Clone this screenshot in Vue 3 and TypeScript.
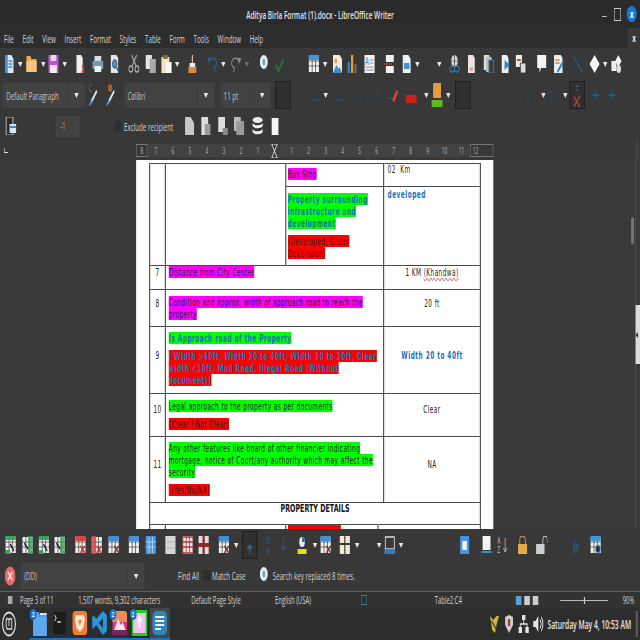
<script setup lang="ts">
// the reference is a 1920x1080 desktop squeezed into a square, so the whole
// page is laid out at 1138x640 and narrowed once at the root
const K = 1138 / 640

type Item = [string, number]

const sizes: Record<string, [number, number]> = {
  a: [8, 18],
  slot: [28, 28],
  slotx: [28, 28],
  slotup: [28, 28],
}

function place(items: Item[], start = 0) {
  let end = start
  return items.map(([name, x]) => {
    const [w, h] = sizes[name] ?? [20, 18]
    const ml = x * K - end
    end = x * K + w
    return { name, ml, w, h }
  })
}

const bar1 = place([
  ['doc', 4], ['a', 18], ['folder', 26], ['a', 41], ['save', 48], ['a', 62.5], ['pdf', 75], ['print', 92],
  ['prev', 109], ['cut', 128], ['copy', 145], ['paste', 161], ['a', 175], ['clone', 187], ['undo', 207],
  ['a', 221], ['redo', 230], ['adim', 243], ['nav', 258], ['check', 274], ['tbl', 308], ['a', 323],
  ['image', 332], ['chart', 347], ['textbox', 364], ['pbreak', 384], ['field', 401], ['a', 415], ['a', 437],
  ['link', 449], ['foot', 466], ['end', 483], ['mark', 500], ['xref', 515], ['comment', 536], ['track', 553],
  ['line', 572], ['diamond', 589], ['a', 603], ['shapes', 611],
])
const brushes = place([['brush1', 88], ['brush2', 105]], 85 * K)
const bar2a = place([['slot', 275]], 270 * K)
const bar2b = place([
  ['dash', 311], ['a', 323], ['dash', 333], ['two', 355], ['two', 372], ['pen', 388], ['redbar', 405], ['a', 424],
  ['hl', 431], ['a', 446], ['slot', 455], ['dots', 522], ['a', 541], ['dots', 545], ['a', 563], ['slotx', 569],
  ['fade', 590], ['fade', 606],
], (275 * K) + 28)
const bar3a = place([['merge', 5]])
const bar3b = place([
  ['p1', 184], ['p2', 200], ['p3', 217], ['p4', 233], ['db', 252], ['pwhite', 269],
], 175 * K)
const bar4 = place([
  ['tg', 5], ['tg2', 22], ['tg', 38], ['tg2', 54], ['tr', 75], ['tr2', 91], ['tb', 108], ['tbl', 128], ['tfill', 145],
  ['tgray', 165], ['tred', 182], ['tdark', 198], ['tb', 218], ['a', 234], ['slotup', 242], ['updown', 262],
  ['down', 278], ['fill', 296], ['a', 313], ['tb', 320], ['win', 339], ['a', 355], ['a', 377], ['border', 384],
  ['a', 399], ['tfill2', 459], ['pg', 481], ['sort', 497], ['lock', 517], ['unlock', 536], ['fx', 572], ['tcalc', 590],
])

const menus = ['File', 'Edit', 'View', 'Insert', 'Format', 'Styles', 'Table', 'Form', 'Tools', 'Window', 'Help']
const ticks = ['7', '6', '5', '4', '3', '2', '1', '', '1', '2', '3', '4', '5', '6', '7', '8', '9', '10', '11']

interface Block {
  tone: 'pink' | 'green' | 'red'
  bold?: boolean
  lines: string[]
}
interface Row {
  no: number
  cls: string
  blocks: Block[]
  value: string
  blue?: boolean
}

const rows: Row[] = [
  {
    no: 7, cls: 'r7', value: '1 KM (Khandwa)',
    blocks: [{ tone: 'pink', lines: ['Distance from City Center'] }],
  },
  {
    no: 8, cls: 'r8', value: '20 ft',
    blocks: [{ tone: 'pink', lines: ['Condition and approx. width of approach road to reach the', 'property'] }],
  },
  {
    no: 9, cls: 'r9', value: 'Width 20 to 40ft', blue: true,
    blocks: [
      { tone: 'green', bold: true, lines: ['Is Approach road of the Property'] },
      { tone: 'red', bold: true, lines: ['( Width >40ft, Width 20 to 40ft, Width 10 to 20ft, Clear', 'width <10ft, Mud Road, Illegal Road (Without', 'document))'] },
    ],
  },
  {
    no: 10, cls: 'r10', value: 'Clear',
    blocks: [
      { tone: 'green', lines: ['Legal approach to the property as per documents'] },
      { tone: 'red', lines: ['(Clear / Not Clear)'] },
    ],
  },
  {
    no: 11, cls: 'r11', value: 'NA',
    blocks: [
      { tone: 'green', lines: ['Any other features like board of other financier indicating', 'mortgage, notice of Court/any authority which may affect the', 'security'] },
      { tone: 'red', lines: [' (Yes/No/NA)'] },
    ],
  },
]

const dock = [
  { icon: 'd-files', badge: true },
  { icon: 'd-term', badge: false },
  { icon: 'd-brave', badge: false },
  { icon: 'd-code', badge: false },
  { icon: 'd-photo', badge: true },
  { icon: 'd-pink', badge: true },
  { icon: 'd-writer', badge: false, on: true },
]
</script>

<template>
  <div class="app">
    <svg class="defs" aria-hidden="true">
      <defs>
        <symbol id="a" viewBox="0 0 8 18"><path d="M0 7h8l-4 5z" fill="#e8e8e8" /></symbol>
        <symbol id="adim" viewBox="0 0 20 18"><path d="M3 7h8l-4 5z" fill="#6a6a6a" /></symbol>
        <symbol id="doc" viewBox="0 0 20 18"><path d="M3 0h10l4 4v14H3z" fill="#dce8f3" /><path d="M3 0h4v18H3z" fill="#4a98d8" /><path d="M8 6h7M8 9h7M8 12h7" stroke="#3b86c6" stroke-width="1.5" /></symbol>
        <symbol id="folder" viewBox="0 0 20 18"><path d="M1 1h7l2 3h9v13H1z" fill="#e2a94f" /><path d="M1 6h18v11H1z" fill="#f4c679" /></symbol>
        <symbol id="save" viewBox="0 0 20 18"><path d="M1 0h18v18H1z" fill="#b653c8" /><path d="M5 0h10v6H5z" fill="#eed6f2" /><path d="M4 10h12v8H4z" fill="#f5e9f7" /></symbol>
        <symbol id="pdf" viewBox="0 0 20 18"><path d="M3 0h8l3 3v15H3z" fill="#f0f0f0" /><path d="M13 10l4 8M17 11l-5 7" stroke="#d04040" stroke-width="1.6" /></symbol>
        <symbol id="print" viewBox="0 0 20 18"><path d="M4 1h12v5H4z" fill="#d7dde2" /><path d="M0 6h20v8H0z" fill="#7e97aa" /><path d="M4 11h12v6H4z" fill="#f4f4f4" /></symbol>
        <symbol id="prev" viewBox="0 0 20 18"><path d="M3 0h10l3 3v15H3z" fill="#e6e6e6" /><circle cx="10" cy="9" r="4" fill="#5c8fb4" stroke="#27618f" stroke-width="1.5" /><path d="M13 12l4 5" stroke="#27618f" stroke-width="2" /></symbol>
        <symbol id="cut" viewBox="0 0 20 18"><g fill="none" stroke="#b4b4b4" stroke-width="1.6"><path d="M6 0l8 11M15 0l-8 11" /><ellipse cx="4.5" cy="14" rx="3.5" ry="3" /><ellipse cx="15.5" cy="14" rx="3.5" ry="3" /></g></symbol>
        <symbol id="copy" viewBox="0 0 20 18"><path d="M1 0h11v14H1z" fill="#e6e6e6" /><path d="M8 4h11v14H8z" fill="#a9a9a9" /></symbol>
        <symbol id="paste" viewBox="0 0 20 18"><path d="M1 2h14v16H1z" fill="#f3e5c2" /><path d="M4 0h8v4H4z" fill="#8a6a3c" /><path d="M9 7h10v11H9z" fill="#f8f8f8" /></symbol>
        <symbol id="clone" viewBox="0 0 20 18"><path d="M9 0h2v8H9z" fill="#d8c9a8" /><path d="M5 8h10v4H5z" fill="#eee" /><path d="M3 12h14v6H3z" fill="#e08a34" /></symbol>
        <symbol id="undo" viewBox="0 0 20 18"><path d="M4 6a7 5 0 1 1 8 7l2 4" fill="none" stroke="#24608f" stroke-width="1.8" /><path d="M0 3h7l-3 6z" fill="#24608f" /></symbol>
        <symbol id="redo" viewBox="0 0 20 18"><path d="M16 6a7 5 0 1 0-8 7l-2 4" fill="none" stroke="#8e8e8e" stroke-width="1.4" /><path d="M20 3h-7l3 6z" fill="#8e8e8e" /></symbol>
        <symbol id="nav" viewBox="0 0 20 18"><circle cx="10" cy="7" r="7" fill="#e8f0f6" /><ellipse cx="10" cy="7" rx="2.5" ry="3.5" fill="#6aa6d6" /></symbol>
        <symbol id="check" viewBox="0 0 20 18"><path d="M3 10l5 6 9-11" fill="none" stroke="#24703a" stroke-width="3" /></symbol>
        <symbol id="grid" viewBox="0 0 20 18"><path d="M1 1h18v16H1z" fill="#f2f2f2" /><path d="M7 1v16M13 1v16M1 6h18M1 11h18" stroke="#4a4a4a" stroke-width="1" /></symbol>
        <symbol id="tbl" viewBox="0 0 20 18"><use href="#grid" /><path d="M1 0h18v5H1z" fill="#4394dc" /></symbol>
        <symbol id="tfill" viewBox="0 0 20 18"><path d="M1 0h18v18H1z" fill="#4596de" /><path d="M7 1v16M13 1v16M1 6h18M1 11h18" stroke="#c9e0f4" stroke-width="1" /></symbol>
        <symbol id="tfill2" viewBox="0 0 20 18"><path d="M2 0h16v18H2z" fill="#4596de" /><path d="M6 5h8v9H6z" fill="#f2f2f2" /></symbol>
        <symbol id="tg" viewBox="0 0 20 18"><use href="#grid" /><path d="M1 0h18v4H1zM1 14h8v4H1z" fill="#3aa25a" /><path d="M9 8l7 7" stroke="#222" stroke-width="2" /></symbol>
        <symbol id="tg2" viewBox="0 0 20 18"><use href="#grid" /><path d="M11 0h8v18h-8z" fill="#3aa25a" opacity=".8" /><path d="M4 7l7 6" stroke="#222" stroke-width="2" /></symbol>
        <symbol id="tr" viewBox="0 0 20 18"><use href="#grid" /><path d="M1 0h18v5H1z" fill="#d94545" /><path d="M10 10l8 7M18 10l-8 7" stroke="#c93030" stroke-width="2" /></symbol>
        <symbol id="tr2" viewBox="0 0 20 18"><use href="#grid" /><path d="M1 0h8v18H1z" fill="#d94545" opacity=".85" /><path d="M10 10l8 7M18 10l-8 7" stroke="#c93030" stroke-width="2" /></symbol>
        <symbol id="tb" viewBox="0 0 20 18"><use href="#grid" /><path d="M1 0h18v5H1z" fill="#3f8fd6" /><path d="M11 10l8 7M19 10l-8 7" stroke="#7a3636" stroke-width="2" /></symbol>
        <symbol id="tgray" viewBox="0 0 20 18"><path d="M1 0h18v18H1z" fill="#d6d6d6" /><path d="M1 6h18M1 12h18" stroke="#aaa" /></symbol>
        <symbol id="tred" viewBox="0 0 20 18"><path d="M1 0h18v18H1z" fill="#f2e4e4" /><path d="M1 1h18v16H1zM7 1v16M13 1v16M1 6h18M1 11h18" fill="none" stroke="#b03b3b" stroke-width="1.4" /></symbol>
        <symbol id="tdark" viewBox="0 0 20 18"><path d="M1 0h18v18H1z" fill="#e8dcdc" /><path d="M10 0v18M0 9h20" stroke="#8a2c2c" stroke-width="4" /></symbol>
        <symbol id="image" viewBox="0 0 20 18"><path d="M2 0h12l4 4v14H2z" fill="#f4ead8" /><path d="M2 18l6-8 4 4 2-2 4 6z" fill="#3f8dcc" /><circle cx="7" cy="6" r="2.5" fill="#e79a4a" /></symbol>
        <symbol id="chart" viewBox="0 0 20 18"><path d="M1 7h4v11H1z" fill="#2f86c8" /><path d="M7 0h4v18H7z" fill="#e0a03c" /><path d="M13 9h4v9h-4z" fill="#6a6a6a" /></symbol>
        <symbol id="textbox" viewBox="0 0 20 18"><path d="M1 0h18v18H1z" fill="#f1f1f1" /><text x="2" y="10" font-size="11" fill="#2f7fc4" font-family="Open Sans, sans-serif">A</text><path d="M10 5h7M10 8h7M3 12h14M3 15h14" stroke="#777" /></symbol>
        <symbol id="pbreak" viewBox="0 0 20 18"><path d="M3 0h14v7H3zM3 11h14v7H3z" fill="#f2f2f2" /><path d="M0 9h14" stroke="#c23a3a" stroke-width="2" stroke-dasharray="3 1" /></symbol>
        <symbol id="field" viewBox="0 0 20 18"><path d="M3 0h10l4 4v14H3z" fill="#eef2f5" /><path d="M5 8h10v6H5z" fill="#4b93cf" /></symbol>
        <symbol id="link" viewBox="0 0 20 18"><circle cx="10" cy="6" r="6" fill="#d7d7d7" /><path d="M4 6h12M10 0v12" stroke="#555" /><ellipse cx="6" cy="14" rx="4.5" ry="3" fill="none" stroke="#2f78b4" stroke-width="1.6" /><ellipse cx="14" cy="14" rx="4.5" ry="3" fill="none" stroke="#2f78b4" stroke-width="1.6" /></symbol>
        <symbol id="foot" viewBox="0 0 20 18"><path d="M4 0h9l3 3v15H4z" fill="#efe3e3" /><path d="M7 13h6M7 15h6" stroke="#c05555" /></symbol>
        <symbol id="end" viewBox="0 0 20 18"><path d="M1 0h10v15H1z" fill="#ddd" /><path d="M5 2h10v15H5z" fill="#bbb" /><path d="M10 5h9v13h-9z" fill="#3a3a3a" stroke="#5f8fb5" /></symbol>
        <symbol id="mark" viewBox="0 0 20 18"><path d="M3 0h9l3 3v15H3z" fill="#f1f1f1" /><path d="M8 5l9 5-9 5z" fill="#2f86c8" /></symbol>
        <symbol id="xref" viewBox="0 0 20 18"><path d="M1 0h11v12H1z" fill="#eee" /><path d="M3 5h7" stroke="#c04a4a" stroke-width="2" /><path d="M9 8h10v10H9z" fill="#ddd" stroke="#222" /></symbol>
        <symbol id="comment" viewBox="0 0 20 18"><path d="M2 0h16v13H9l-3 5v-5H2z" fill="#f5f5f5" /></symbol>
        <symbol id="track" viewBox="0 0 20 18"><path d="M2 0h12l3 3v15H2z" fill="#eee" /><path d="M4 5h8M4 8h8" stroke="#d18a3c" stroke-width="1.5" /><path d="M8 17l10-10" stroke="#2f86c8" stroke-width="3" /></symbol>
        <symbol id="line" viewBox="0 0 20 18"><path d="M1 0l18 18" stroke="#2e5878" stroke-width="1.8" /></symbol>
        <symbol id="diamond" viewBox="0 0 20 18"><path d="M10 0l9 9-9 9-9-9z" fill="#f6f6f6" /></symbol>
        <symbol id="shapes" viewBox="0 0 20 18"><path d="M1 6h9v10H1z" fill="#eee" /><path d="M13 0l6 6-6 6-5-6z" fill="#f4f4f4" /><circle cx="14" cy="14" r="4" fill="#ddd" /></symbol>
        <symbol id="brush1" viewBox="0 0 20 24"><text x="2" y="9" font-size="11" fill="#2e75ad" font-family="Open Sans, sans-serif">C</text><path d="M2 23l5-3 10-11-2-2L6 17z" fill="#dfe9f0" /><path d="M2 23l4-6 3 2z" fill="#3c8ed0" /></symbol>
        <symbol id="brush2" viewBox="0 0 20 24"><circle cx="9" cy="5" r="3.5" fill="#c9792f" /><path d="M9 0v10M4 5h10" stroke="#7c4b1e" /><path d="M2 23l5-3 10-11-2-2L6 17z" fill="#dfe9f0" /><path d="M2 23l4-6 3 2z" fill="#3c8ed0" /></symbol>
        <symbol id="slot" viewBox="0 0 28 28"><path d="M1 0h26v28H1z" fill="#303030" stroke="#1e1e1e" stroke-width="2" /></symbol>
        <symbol id="slotx" viewBox="0 0 28 28"><path d="M1 0h26v28H1z" fill="#303030" stroke="#1e1e1e" stroke-width="2" /><path d="M14 4v8" stroke="#2f5c7e" stroke-width="3" stroke-dasharray="2 2" /><path d="M8 15l11 11M19 15L8 26" stroke="#a8423a" stroke-width="2" /></symbol>
        <symbol id="slotup" viewBox="0 0 28 28"><path d="M1 0h26v28H1z" fill="#303030" stroke="#1e1e1e" stroke-width="2" /><path d="M14 23v-8M10 18l4-4 4 4" fill="none" stroke="#2f6c9c" stroke-width="1.8" /></symbol>
        <symbol id="dash" viewBox="0 0 20 18"><path d="M2 14h15" stroke="#2c4f69" stroke-width="1.6" /></symbol>
        <symbol id="two" viewBox="0 0 20 18"><text x="5" y="13" font-size="11" fill="#2c4f69" font-family="Open Sans, sans-serif">2</text></symbol>
        <symbol id="pen" viewBox="0 0 20 18"><path d="M0 12h7" stroke="#3a7a5a" /><path d="M7 14l8-10 3 2-7 10z" fill="#d64545" /></symbol>
        <symbol id="redbar" viewBox="0 0 20 18"><path d="M0 9h20v8H0z" fill="#c9211e" /></symbol>
        <symbol id="hl" viewBox="0 0 20 24"><path d="M3 0h14v15H3z" fill="#e59a3c" /><path d="M0 17h20v7H0z" fill="#5eb91e" /></symbol>
        <symbol id="dots" viewBox="0 0 20 18"><path d="M10 0v18" stroke="#274f6b" stroke-width="2" stroke-dasharray="2 3" /></symbol>
        <symbol id="fade" viewBox="0 0 20 18"><path d="M10 4v10" stroke="#24465f" stroke-width="5" /><path d="M4 9h12" stroke="#35617f" stroke-width="1.5" /></symbol>
        <symbol id="merge" viewBox="0 0 20 18"><path d="M2 0h12v18H2z" fill="#2b2b2b" stroke="#ddd" /><path d="M8 7h12v9H8z" fill="#d8e4ee" /><path d="M8 10h12" stroke="#3f86bf" stroke-width="2" /></symbol>
        <symbol id="p1" viewBox="0 0 20 18"><path d="M2 0h10l6 6v12H2z" fill="#c8c8c8" /></symbol>
        <symbol id="p2" viewBox="0 0 20 18"><path d="M2 0h12v18H2z" fill="#dedede" /><path d="M8 7h10v11H8z" fill="#9c9c9c" /></symbol>
        <symbol id="p3" viewBox="0 0 20 18"><path d="M2 0h12v15H2z" fill="#dedede" /><path d="M10 11h9v7h-9z" fill="#8a8a8a" /></symbol>
        <symbol id="p4" viewBox="0 0 20 18"><path d="M1 0h12v14H1z" fill="#bbb" /><path d="M5 4h14v14H5z" fill="#9a9a9a" /></symbol>
        <symbol id="db" viewBox="0 0 20 18"><ellipse cx="10" cy="3" rx="9" ry="3" fill="#eee" /><path d="M1 6c3 3 15 3 18 0v3c-3 3-15 3-18 0zM1 12c3 3 15 3 18 0v3c-3 3-15 3-18 0z" fill="#eee" /></symbol>
        <symbol id="pwhite" viewBox="0 0 20 18"><path d="M4 1h12v17H4z" fill="#f6f6f6" /></symbol>
        <symbol id="updown" viewBox="0 0 20 18"><path d="M10 8V1M7 4l3-3 3 3M10 10v7M7 14l3 3 3-3" fill="none" stroke="#24567c" stroke-width="1.6" /></symbol>
        <symbol id="down" viewBox="0 0 20 18"><path d="M10 2v12M6 10l4 4 4-4" fill="none" stroke="#24567c" stroke-width="1.8" /></symbol>
        <symbol id="fill" viewBox="0 0 20 18"><path d="M3 13h16v5H3z" fill="#e6d81c" /><circle cx="11" cy="6" r="5" fill="#e8eef2" /><path d="M11 1v5h5a5 5 0 0 0-5-5z" fill="#2f6c9c" /></symbol>
        <symbol id="win" viewBox="0 0 20 18"><path d="M1 0h18v18H1z" fill="#f3e9d2" /><path d="M10 0v18M1 8h18" stroke="#333" stroke-width="2" /></symbol>
        <symbol id="border" viewBox="0 0 20 18"><path d="M2 1h16v12H2z" fill="none" stroke="#ddd" stroke-width="1.5" /><path d="M0 13h20v5H0z" fill="#2f7fc0" /></symbol>
        <symbol id="pg" viewBox="0 0 20 18"><path d="M3 0h14v14H3z" fill="#f4f4f4" /><path d="M1 16h18" stroke="#3b8ed0" stroke-width="2" /></symbol>
        <symbol id="sort" viewBox="0 0 20 18"><text x="0" y="8" font-size="9" fill="#cfcfcf" font-family="Open Sans, sans-serif">A</text><text x="0" y="17" font-size="9" fill="#cfcfcf" font-family="Open Sans, sans-serif">Z</text><path d="M14 2v14M11 12l3 4 3-4" fill="none" stroke="#bbb" /></symbol>
        <symbol id="lock" viewBox="0 0 20 18"><path d="M5 8V4a5 4 0 0 1 10 0v4" fill="none" stroke="#c99a5a" stroke-width="1.5" /><path d="M2 8h16v10H2z" fill="#e7a84a" /></symbol>
        <symbol id="unlock" viewBox="0 0 20 18"><path d="M12 8V4a4 4 0 0 1 8 0v3" fill="none" stroke="#ccc" stroke-width="1.5" /><path d="M0 8h15v10H0z" fill="#cfcfcf" /></symbol>
        <symbol id="fx" viewBox="0 0 20 18"><text x="2" y="15" font-size="15" font-style="italic" fill="#2f6c9c" font-family="Liberation Serif, serif">fx</text></symbol>
        <symbol id="tcalc" viewBox="0 0 20 18"><use href="#tbl" /><circle cx="14" cy="13" r="4" fill="#2f2f2f" stroke="#4394dc" stroke-width="1.5" /></symbol>
        <symbol id="stop" viewBox="0 0 20 22"><circle cx="10" cy="11" r="9.5" fill="#e46a6a" /><path d="M6 7l8 8M14 7l-8 8" stroke="#fbe3e3" stroke-width="2" /></symbol>
        <symbol id="mint" viewBox="0 0 26 26"><circle cx="13" cy="13" r="11.5" fill="none" stroke="#ddd" stroke-width="2" /><path d="M8 8v7a3 3 0 0 0 3 3h7v-8a2.5 2.5 0 0 0-5 0v5M13 10a2.5 2.5 0 0 0-5 0" fill="none" stroke="#ddd" stroke-width="1.6" /></symbol>
        <symbol id="d-files" viewBox="0 0 28 26"><path d="M2 2h10l2 3h12v21H2z" fill="#4f9ee3" /><path d="M2 7h24v19H2z" fill="#5aa9ee" /><path d="M14 3h12v2H14z" fill="#d5e6f4" /></symbol>
        <symbol id="d-term" viewBox="0 0 28 26"><rect x="1" y="1" width="26" height="24" rx="4" fill="#1d1d1d" stroke="#3a3a3a" /><path d="M5 5l3 3-3 3M10 12h6" fill="none" stroke="#ddd" stroke-width="1.3" /></symbol>
        <symbol id="d-brave" viewBox="0 0 28 26"><rect x="1" y="1" width="26" height="24" rx="5" fill="#ef7d31" /><path d="M7 5h14l2 5-3 8-6 4-6-4-3-8z" fill="#fbe5d6" /><path d="M11 10h6l-3 6z" fill="#ef7d31" /></symbol>
        <symbol id="d-code" viewBox="0 0 28 26"><path d="M20 1l7 4v16l-7 4-12-10-5 4-2-2v-10l2-2 5 4z" fill="#2b95dc" /><path d="M20 8l-7 5 7 5z" fill="#2d2d2d" /></symbol>
        <symbol id="d-photo" viewBox="0 0 28 26"><rect x="1" y="1" width="26" height="24" rx="5" fill="#d8367f" /><path d="M1 6a5 5 0 0 1 5-5h16a5 5 0 0 1 5 5v6H1z" fill="#f08a5a" /><path d="M4 20l7-11 5 6 3-3 5 8z" fill="#f6e6ee" /><path d="M1 20h26v5H1z" fill="#7b2560" /></symbol>
        <symbol id="d-pink" viewBox="0 0 28 26"><path d="M0 0h28v26H0z" fill="#1cd21c" /><path d="M3 3h22v20H3z" fill="#f5c2ef" /><path d="M10 10h8M14 6v12" stroke="#fff" stroke-width="3" /></symbol>
        <symbol id="d-writer" viewBox="0 0 28 26"><rect x="1" y="1" width="26" height="24" rx="6" fill="#2f86b8" /><path d="M6 7h16M6 11h16M6 15h16M6 19h10" stroke="#eef6fb" stroke-width="2" /></symbol>
        <symbol id="tray1" viewBox="0 0 20 20"><path d="M2 2l6 4 6-4 4 0-4 8-3 9-5-3-2-8z" fill="#d9b936" /><path d="M5 7l8 8" stroke="#444" stroke-width="2" /></symbol>
        <symbol id="tray2" viewBox="0 0 20 20"><path d="M3 3l7-2 7 2v8l-7 8-7-8z" fill="#cfcfcf" /><path d="M10 5v7" stroke="#a33" stroke-width="4" /></symbol>
        <symbol id="tray3" viewBox="0 0 20 20"><path d="M7 1h6v5H7zM1 13h6v6H1zM13 13h6v6h-6z" fill="#e4e4e4" /><path d="M10 6v4M4 13v-3h12v3" fill="none" stroke="#e4e4e4" stroke-width="1.5" /></symbol>
        <symbol id="tray4" viewBox="0 0 20 20"><path d="M1 7h4l5-5v16l-5-5H1z" fill="#e4e4e4" /><path d="M13 6a5 5 0 0 1 0 8M15 3a9 9 0 0 1 0 14" fill="none" stroke="#e4e4e4" stroke-width="1.6" /></symbol>
        <symbol id="zero" viewBox="0 0 14 14"><path d="M2 0h10L7 7l5 7H2l5-7z" fill="#383838" stroke="#e8e8e8" stroke-width="1.2" /></symbol>
      </defs>
    </svg>

    <header class="title">
      <span class="title-text">Aditya Birla Format (1).docx - LibreOffice Writer</span>
      <div class="win-btns">
        <span class="min"></span>
        <span class="max"></span>
        <span class="close">x</span>
      </div>
    </header>

    <nav class="menu">
      <div class="menu-items">
        <span v-for="m in menus" :key="m">{{ m }}</span>
      </div>
      <span class="doc-close">x</span>
    </nav>

    <div class="bar bar-1">
      <svg v-for="(ic, i) in bar1" :key="i" :width="ic.w" :height="ic.h" :style="{ marginLeft: ic.ml + 'px' }"><use :href="'#' + ic.name" /></svg>
    </div>

    <div class="bar bar-2">
      <div class="combo c-style"><span class="combo-text">Default Paragraph</span><span class="combo-arrow"><svg width="8" height="18"><use href="#a" /></svg></span></div>
      <svg v-for="(ic, i) in brushes" :key="'b' + i" width="20" height="24" :style="{ marginLeft: ic.ml + 'px' }"><use :href="'#' + ic.name" /></svg>
      <div class="combo c-font"><span class="combo-text ital">Calibri</span><span class="combo-arrow"><svg width="8" height="18"><use href="#a" /></svg></span></div>
      <div class="combo c-size"><span class="combo-text">11 pt</span><span class="combo-arrow"><svg width="8" height="18"><use href="#a" /></svg></span></div>
      <svg v-for="(ic, i) in bar2a" :key="'s' + i" :width="ic.w" :height="ic.h" :style="{ marginLeft: ic.ml + 'px' }"><use :href="'#' + ic.name" /></svg>
      <svg v-for="(ic, i) in bar2b" :key="'n' + i" :width="ic.w" :height="ic.name === 'hl' ? 24 : ic.h" :style="{ marginLeft: ic.ml + 'px' }"><use :href="'#' + ic.name" /></svg>
    </div>

    <div class="bar bar-3">
      <svg v-for="(ic, i) in bar3a" :key="'m' + i" :width="ic.w" :height="ic.h" :style="{ marginLeft: ic.ml + 'px' }"><use :href="'#' + ic.name" /></svg>
      <span class="spin">-1</span>
      <span class="tick"></span>
      <span class="exclude">Exclude recipient</span>
      <svg v-for="(ic, i) in bar3b" :key="'p' + i" :width="ic.w" :height="ic.h" :style="{ marginLeft: ic.ml + 'px' }"><use :href="'#' + ic.name" /></svg>
    </div>

    <div class="ruler-row">
      <span class="corner"></span>
      <div class="ruler">
        <span class="ruler-end">8</span>
        <span v-for="(t, i) in ticks" :key="i" class="ruler-tick">
          <svg v-if="t === ''" width="14" height="14"><use href="#zero" /></svg>
          <template v-else>{{ t }}</template>
        </span>
        <span class="ruler-end last">12</span>
      </div>
      <span class="ruler-line"></span>
    </div>

    <main class="doc">
      <section class="page">
        <table class="sheet">
          <colgroup>
            <col class="c1" /><col class="c2" /><col class="c3" /><col class="c4" />
          </colgroup>
          <tbody>
            <tr class="r5">
              <td rowspan="2"></td>
              <td rowspan="2"></td>
              <td><div class="stack bus"><div class="blk"><span class="hl pink">Bus Stop</span></div></div></td>
              <td><div class="km">02&nbsp; Km</div></td>
            </tr>
            <tr class="r6">
              <td>
                <div class="stack infra">
                  <div class="blk">
                    <span class="hl green bold">Property surrounding</span>
                    <span class="hl green bold">infrastructure and</span>
                    <span class="hl green bold">development</span>
                  </div>
                  <div class="blk">
                    <span class="hl red">(Developed, Under</span>
                    <span class="hl red">Developed)</span>
                  </div>
                </div>
              </td>
              <td><div class="km dev">developed</div></td>
            </tr>
            <tr v-for="r in rows" :key="r.no" :class="r.cls">
              <td class="no">{{ r.no }}</td>
              <td colspan="2">
                <div class="stack">
                  <div v-for="(b, i) in r.blocks" :key="i" class="blk">
                    <span v-for="l in b.lines" :key="l" class="hl" :class="[b.tone, { bold: b.bold }]">{{ l }}</span>
                  </div>
                </div>
              </td>
              <td class="val" :class="{ 'val-blue': r.blue }">
                <template v-if="r.no === 7">1 KM <span class="typo">(Khandwa)</span></template>
                <template v-else>{{ r.value }}</template>
              </td>
            </tr>
          </tbody>
        </table>
        <table class="sheet sheet-2">
          <colgroup>
            <col class="c1" /><col class="c2" /><col class="c3b" /><col class="c4b" />
          </colgroup>
          <tbody>
            <tr class="r-head"><td colspan="4" class="head">PROPERTY DETAILS</td></tr>
            <tr class="r-last">
              <td></td>
              <td></td>
              <td><div class="stack cut"><div class="blk"><span class="hl red stub"></span></div></div></td>
              <td></td>
            </tr>
          </tbody>
        </table>
      </section>
      <div class="scroll"><span class="thumb"></span></div>
      <div class="side"><span class="handle"></span></div>
    </main>

    <div class="bar bar-4">
      <svg v-for="(ic, i) in bar4" :key="i" :width="ic.w" :height="ic.h" :style="{ marginLeft: ic.ml + 'px' }"><use :href="'#' + ic.name" /></svg>
    </div>

    <div class="find">
      <svg class="stop" width="20" height="22"><use href="#stop" /></svg>
      <div class="combo c-find"><span class="combo-text">(DD)</span><span class="combo-arrow"><svg width="8" height="18"><use href="#a" /></svg></span></div>
      <span class="find-all">Find All</span>
      <span class="tick small"></span>
      <span class="match">Match Case</span>
      <svg class="info" width="20" height="18"><use href="#nav" /></svg>
      <span class="replaced">Search key replaced 8 times.</span>
    </div>

    <footer class="status">
      <span class="st-print"></span>
      <span>Page 3 of 11</span>
      <span>1,507 words, 9,302 characters</span>
      <span>Default Page Style</span>
      <span>English (USA)</span>
      <span class="st-square"></span>
      <span>Table2:C4</span>
      <span class="views"><i class="on"></i><i></i><i></i></span>
      <span class="slider"><i></i></span>
      <span>90%</span>
    </footer>

    <div class="task">
      <svg class="mint" width="26" height="26"><use href="#mint" /></svg>
      <div class="dock">
        <div v-for="d in dock" :key="d.icon" class="dock-item" :class="{ on: d.on }">
          <svg width="28" height="26"><use :href="'#' + d.icon" /></svg>
          <span v-if="d.badge" class="badge">2</span>
        </div>
      </div>
      <div class="tray">
        <svg width="20" height="20"><use href="#tray1" /></svg>
        <svg width="20" height="20"><use href="#tray2" /></svg>
        <svg width="20" height="20"><use href="#tray3" /></svg>
        <svg width="20" height="20"><use href="#tray4" /></svg>
        <span class="clock">Saturday May 4, 10:53 AM</span>
        <span class="grip"></span>
      </div>
    </div>
  </div>
</template>

<style>
html,
body {
  margin: 0;
  width: 640px;
  height: 640px;
  overflow: hidden;
  background: #2d2d2d;
}
</style>

<style scoped>
.app {
  width: 1138px;
  height: 640px;
  transform: scaleX(0.5625);
  transform-origin: 0 0;
  display: flex;
  flex-direction: column;
  background: #383838;
  color: #d4d4d4;
  font-family: "Open Sans", "Noto Sans", sans-serif;
  font-size: 11px;
  overflow: hidden;
}
.defs {
  display: block;
  width: 0;
  height: 0;
}

.title {
  height: 28px;
  background: #2b2b2b;
  display: flex;
  align-items: center;
  justify-content: center;
  position: relative;
  flex: none;
}
.title-text {
  font-size: 11.5px;
  font-weight: 600;
  color: #e2e2e2;
}
.win-btns {
  position: absolute;
  right: 0;
  top: 0;
  height: 28px;
  display: flex;
  align-items: center;
}
.min {
  width: 9px;
  height: 1px;
  background: #bbb;
  margin-top: 4px;
}
.max {
  width: 10px;
  height: 11px;
  border: 1px solid #ccc;
  margin-left: 13px;
}
.close {
  width: 18px;
  height: 16px;
  margin: 0 6px 0 10px;
  border-radius: 50%;
  background: #1478d4;
  color: #fff;
  font-weight: 700;
  font-size: 11px;
  line-height: 15px;
  text-align: center;
}

.menu {
  height: 20px;
  flex: none;
  display: flex;
  background: #383838;
}
.menu-items {
  width: 1116px;
  background: #2d2d2d;
  display: flex;
  align-items: center;
  gap: 15.6px;
  padding-left: 7px;
  box-sizing: border-box;
  font-size: 11px;
  color: #d8d8d8;
}
.doc-close {
  margin-left: 8px;
  font-size: 11px;
  font-weight: 700;
  color: #e6e6e6;
  line-height: 20px;
}

.bar {
  display: flex;
  align-items: center;
  flex: none;
  background: #383838;
}
.bar svg {
  flex: none;
}
.bar-1 {
  height: 32px;
}
.bar-2 {
  height: 30px;
}
.bar-3 {
  height: 30px;
  padding-top: 2px;
  box-sizing: border-box;
}
.bar-4 {
  height: 31px;
}

.combo {
  display: flex;
  flex: none;
  height: 25px;
  background: #424242;
  border-radius: 2px;
  align-items: center;
}
.combo-text {
  flex: 1;
  padding-left: 6px;
  font-size: 11px;
  color: #c4c4c4;
  white-space: nowrap;
}
.ital {
  font-style: italic;
}
.combo-arrow {
  width: 30px;
  height: 100%;
  display: flex;
  align-items: center;
  justify-content: center;
  border-left: 1px solid #363636;
}
.c-style {
  width: 146px;
  margin-left: 5px;
}
.c-font {
  width: 160px;
  margin-left: 14px;
}
.c-size {
  width: 89px;
  margin-left: 11px;
}
.c-find {
  width: 220px;
  height: 26px;
  margin-left: 9px;
}

.spin {
  width: 43px;
  height: 21px;
  margin-left: 70.6px;
  background: #424242;
  border-radius: 2px;
  font-size: 10px;
  line-height: 21px;
  padding-left: 8px;
  box-sizing: border-box;
  color: #aaa;
}
.tick {
  width: 12px;
  height: 11px;
  margin-left: 62px;
  background: #2e2e2e;
  border-radius: 2px;
}
.exclude {
  margin-left: 4px;
  width: 91px;
  white-space: nowrap;
  font-size: 11px;
}

.ruler-row {
  height: 20px;
  flex: none;
  display: flex;
  align-items: flex-start;
  background: #383838;
}
.corner {
  width: 5px;
  height: 4px;
  margin: 8px 0 0 8px;
  border-left: 1px solid #eee;
  border-bottom: 1px solid #eee;
  flex: none;
}
.ruler {
  display: flex;
  width: 635px;
  height: 13px;
  margin: 4px 0 0 228px;
  background: #424242;
  font-size: 8.5px;
  line-height: 13px;
  color: #b8b8b8;
  flex: none;
}
.ruler-end {
  width: 20px;
  text-align: center;
  box-sizing: border-box;
  border: 1px solid #777;
  line-height: 11px;
  background: #383838;
  flex: none;
}
.ruler-end.last {
  flex: 1;
  text-align: left;
  padding-left: 4px;
}
.ruler-tick {
  width: 30.2px;
  display: flex;
  align-items: center;
  justify-content: center;
  flex: none;
}
.ruler-line {
  width: 1px;
  height: 20px;
  margin-left: 255px;
  background: #5c5c5c;
  flex: none;
}

.doc {
  height: 369px;
  flex: none;
  display: flex;
  background: #3a3a3a;
}
.page {
  width: 635px;
  margin-left: 242px;
  flex: none;
  background: #fff;
  padding: 3px 0 0 23px;
  box-sizing: border-box;
  overflow: hidden;
  font-family: "DejaVu Sans", sans-serif;
  font-size: 10.3px;
  letter-spacing: 0.75px;
  color: #222;
}
.sheet {
  table-layout: fixed;
  width: 588px;
  border-collapse: collapse;
}
.sheet td {
  border: 1px solid #4a4a4a;
  border-left-width: 2px;
  border-right-width: 2px;
  padding: 0;
  vertical-align: top;
  line-height: 12px;
}
.sheet-2 {
  margin-top: -1px;
}
.c1 {
  width: 28px;
}
.c2 {
  width: 213.5px;
}
.c3 {
  width: 174.5px;
}
.c4 {
  width: 172px;
}
.c3b {
  width: 164px;
}
.c4b {
  width: 182.5px;
}
.r5 {
  height: 23px;
}
.r6 {
  height: 79px;
}
.r7 {
  height: 22.5px;
}
.r8 {
  height: 37px;
}
.r9 {
  height: 67px;
}
.r10 {
  height: 42.5px;
}
.r11 {
  height: 66.5px;
}
.r-head {
  height: 22px;
}
.r-last {
  height: 8px;
}
.sheet td.no,
.sheet td.val {
  vertical-align: middle;
  text-align: center;
  padding-bottom: 11px;
}
.stack {
  display: flex;
  flex-direction: column;
  gap: 6px;
  padding-left: 5px;
}
.r8 .stack {
  padding-top: 6px;
}
.r9 .stack {
  padding-top: 5px;
}
.r10 .stack {
  padding-top: 6px;
}
.r11 .stack {
  padding-top: 5px;
}
.bus,
.infra,
.cut {
  padding-left: 3px;
}
.bus {
  padding-top: 4px;
}
.infra {
  padding-top: 6px;
}
.blk {
  display: flex;
  flex-direction: column;
  align-items: flex-start;
}
.hl {
  display: block;
  height: 12px;
  line-height: 12px;
  white-space: pre;
}
.stub {
  width: 94px;
}
.pink {
  background: #ff00ff;
}
.green {
  background: #00ff00;
}
.red {
  background: #ff0000;
}
.bold,
.dev,
.val-blue {
  font-family: "DejaVu Sans", sans-serif;
  font-weight: 700;
  font-size: 10.3px;
  letter-spacing: 0.85px;
  color: #1f6fb8;
}
.km {
  padding: 0 0 0 6px;
  margin-top: -1px;
}
.dev {
  margin-top: 1px;
}
.typo {
  text-decoration: underline wavy #e03030 1px;
}
.sheet td.head {
  text-align: center;
  font-weight: 700;
  font-size: 11.3px;
  letter-spacing: 0;
  color: #111;
}

.scroll {
  width: 7px;
  margin-left: 245px;
  flex: none;
}
.thumb {
  display: block;
  width: 5px;
  height: 27px;
  margin-top: 57px;
  background: #777;
  border-radius: 3px;
}
.side {
  flex: 1;
  border-left: 1px solid #5c5c5c;
}
.handle {
  display: flex;
  align-items: center;
  height: 59px;
  margin-top: 145px;
  background: #dcdcdc;
}
.handle::after {
  content: "";
  border-right: 4px solid #222;
  border-top: 3px solid transparent;
  border-bottom: 3px solid transparent;
}

.find {
  height: 32px;
  flex: none;
  display: flex;
  align-items: center;
  background: #383838;
  border-bottom: 1px solid #5e5e5e;
  box-sizing: border-box;
  font-size: 11px;
  white-space: nowrap;
}
.stop {
  margin-left: 8px;
  flex: none;
}
.find-all {
  width: 38px;
  margin-left: 59.5px;
}
.tick.small {
  margin-left: 6.5px;
}
.match {
  width: 61px;
  margin-left: 4px;
}
.info {
  margin-left: 21px;
  flex: none;
}
.replaced {
  margin-left: 6px;
}

.status {
  height: 16px;
  flex: none;
  display: grid;
  grid-template-columns: 21.5px 103.5px 201px 149px 153px 131px 144px 79px 111px 1fr;
  align-items: center;
  padding-left: 14px;
  box-sizing: border-box;
  background: #323232;
  font-size: 10.5px;
  white-space: nowrap;
}
.st-print {
  width: 8px;
  height: 8px;
  background: #aaa;
}
.st-square {
  width: 8px;
  height: 8px;
  border: 1px solid #2f7fa8;
}
.views {
  display: flex;
  gap: 5px;
}
.views i {
  width: 10px;
  height: 9px;
  background: #ccc;
}
.views i.on {
  background: #5a9fd6;
}
.slider {
  display: block;
  width: 85px;
  height: 1px;
  background: #bbb;
  position: relative;
}
.slider i {
  position: absolute;
  left: 42px;
  top: -3px;
  width: 2px;
  height: 7px;
  background: #ccc;
}

.task {
  height: 32px;
  flex: none;
  display: flex;
  align-items: center;
  background: #2d2d2d;
}
.mint {
  margin-left: 3px;
  flex: none;
}
.dock {
  display: flex;
  margin-left: 24px;
  height: 32px;
}
.dock-item {
  width: 35.5px;
  height: 32px;
  display: flex;
  align-items: center;
  justify-content: center;
  box-sizing: border-box;
  border-bottom: 2px solid #1a73c8;
  position: relative;
}
.dock-item.on {
  background: #454545;
}
.badge {
  position: absolute;
  left: 0;
  top: 1px;
  width: 12px;
  height: 11px;
  border-radius: 50%;
  background: #1478d4;
  color: #fff;
  font-size: 7.5px;
  font-weight: 700;
  line-height: 11px;
  text-align: center;
}
.tray {
  margin-left: auto;
  display: flex;
  align-items: center;
  gap: 6px;
}
.clock {
  font-size: 12px;
  font-weight: 600;
  color: #e4e4e4;
  white-space: nowrap;
}
.grip {
  width: 4px;
  height: 26px;
  margin: 0 4px 0 2px;
  background: #5a5a5a;
}
</style>
